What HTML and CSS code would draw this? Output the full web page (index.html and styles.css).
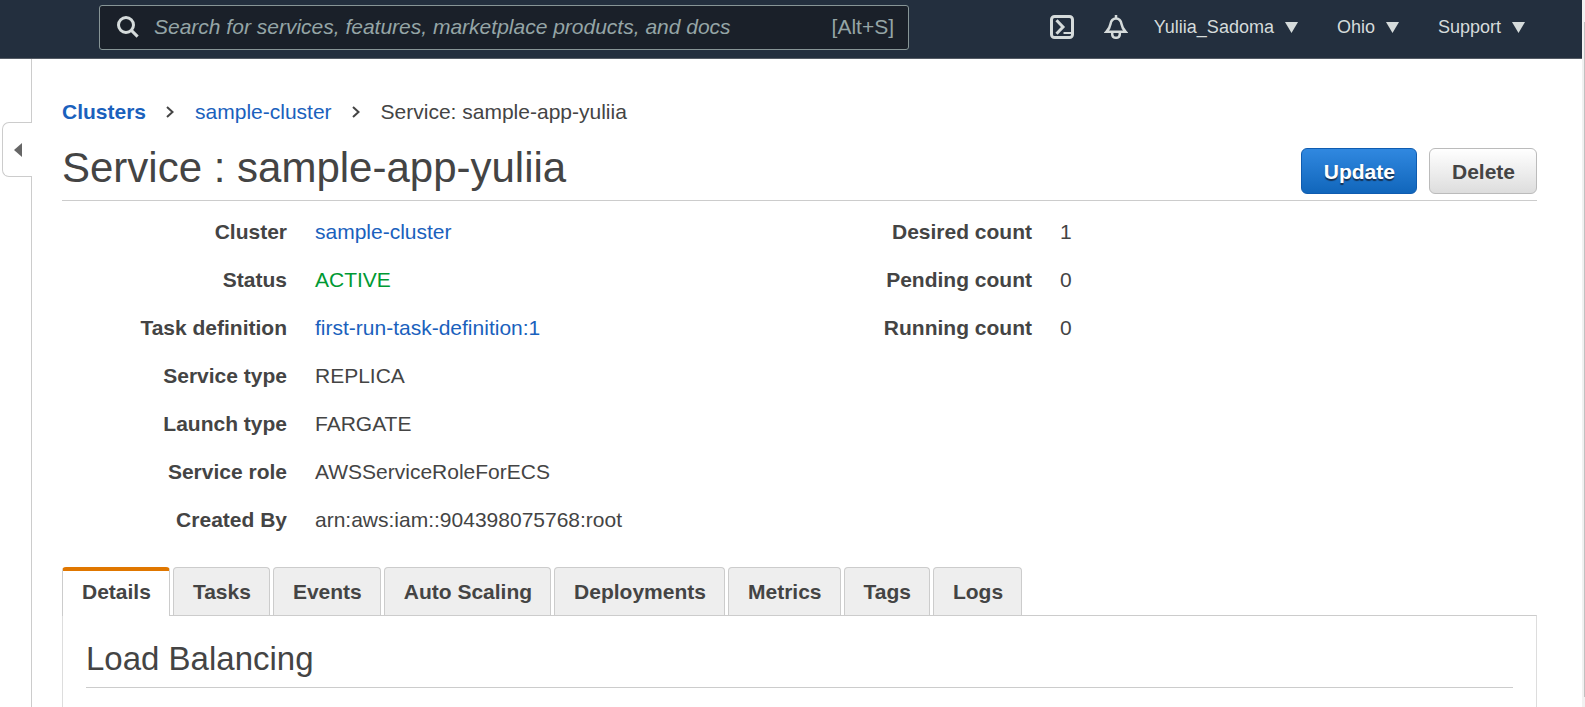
FILE: index.html
```
<!DOCTYPE html>
<html lang="en">
<head>
<meta charset="utf-8">
<title>Service : sample-app-yuliia</title>
<link rel="stylesheet" href="styles.css">
</head>
<body>
<div class="page">
  <header class="topbar">
    <form class="search">
      <svg class="search-icon" viewBox="0 0 22 22" aria-hidden="true"><circle cx="9" cy="9" r="7.5"/><path d="M14.4 14.4L20.6 20.6"/></svg>
      <input class="search-input" type="text" aria-label="Search" placeholder="Search for services, features, marketplace products, and docs">
      <span class="search-hint">[Alt+S]</span>
    </form>
    <nav class="tools">
      <button class="icon-button" type="button" aria-label="CloudShell">
        <svg class="icon" viewBox="0 0 24 24"><rect x="1.5" y="1.5" width="21" height="21" rx="3"/><path d="M6.500 5.200L13 12L6.500 18.800"/><path class="thin" d="M13.500 18H21"/></svg>
      </button>
      <button class="icon-button" type="button" aria-label="Notifications">
        <svg class="icon bell" viewBox="0 0 24 24"><path d="M12 0V3"/><path d="M12 3.400C8.800 3.400 7 5.600 6.500 9C6 12.500 5 14 2.300 16.800H21.700C19 14 18 12.500 17.500 9C17 5.600 15.200 3.400 12 3.400Z"/><path d="M8.200 17.500V19C8.200 21.400 9.700 22.800 12 22.800C14.300 22.800 15.800 21.400 15.800 19V17.500"/></svg>
      </button>
      <button class="menu" type="button">Yuliia_Sadoma<svg class="caret" viewBox="0 0 13 11"><path d="M0 0H13L6.500 11Z"/></svg></button>
      <button class="menu" type="button">Ohio<svg class="caret" viewBox="0 0 13 11"><path d="M0 0H13L6.500 11Z"/></svg></button>
      <button class="menu" type="button">Support<svg class="caret" viewBox="0 0 13 11"><path d="M0 0H13L6.500 11Z"/></svg></button>
    </nav>
  </header>
  <div class="body">
    <aside class="rail">
      <button class="rail-toggle" type="button" aria-label="Open navigation"><svg class="rail-arrow" viewBox="0 0 8 14"><path d="M8 0V14L0 7Z"/></svg></button>
    </aside>
    <main class="content">
      <nav class="crumbs" aria-label="Breadcrumb">
        <a class="crumb-root" href="#">Clusters</a>
        <svg class="chevron" viewBox="0 0 8 12"><path d="M1 1L6.500 6L1 11"/></svg>
        <a href="#">sample-cluster</a>
        <svg class="chevron" viewBox="0 0 8 12"><path d="M1 1L6.500 6L1 11"/></svg>
        <span>Service: sample-app-yuliia</span>
      </nav>
      <div class="title-row">
        <h1 class="title">Service : sample-app-yuliia</h1>
        <div class="actions">
          <button class="btn btn-primary" type="button">Update</button>
          <button class="btn" type="button">Delete</button>
        </div>
      </div>
      <div class="summary">
        <dl class="facts">
          <dt>Cluster</dt><dd><a href="#">sample-cluster</a></dd>
          <dt>Status</dt><dd class="active">ACTIVE</dd>
          <dt>Task definition</dt><dd><a href="#">first-run-task-definition:1</a></dd>
          <dt>Service type</dt><dd>REPLICA</dd>
          <dt>Launch type</dt><dd>FARGATE</dd>
          <dt>Service role</dt><dd>AWSServiceRoleForECS</dd>
          <dt>Created By</dt><dd>arn:aws:iam::904398075768:root</dd>
        </dl>
        <dl class="facts">
          <dt>Desired count</dt><dd>1</dd>
          <dt>Pending count</dt><dd>0</dd>
          <dt>Running count</dt><dd>0</dd>
        </dl>
      </div>
      <div class="tabs" role="tablist">
        <button class="tab selected" type="button" role="tab" aria-selected="true">Details</button>
        <button class="tab" type="button" role="tab">Tasks</button>
        <button class="tab" type="button" role="tab">Events</button>
        <button class="tab" type="button" role="tab">Auto Scaling</button>
        <button class="tab" type="button" role="tab">Deployments</button>
        <button class="tab" type="button" role="tab">Metrics</button>
        <button class="tab" type="button" role="tab">Tags</button>
        <button class="tab" type="button" role="tab">Logs</button>
      </div>
      <section class="panel" role="tabpanel">
        <h2 class="panel-title">Load Balancing</h2>
      </section>
    </main>
  </div>
</div>
<div class="scrollbar" aria-hidden="true"><div class="scroll-thumb"></div></div>
</body>
</html>
```
FILE: styles.css
```
* { box-sizing: border-box; }
body {
  margin: 0;
  display: flex;
  height: 100vh;
  overflow: hidden;
  background: #fff;
  color: #444;
  font: 21px/24px "Liberation Sans", Arial, sans-serif;
}
button, input { font: inherit; }
a { color: #1a61bd; text-decoration: none; }

.page { flex: 1; min-width: 0; display: flex; flex-direction: column; }

.topbar {
  flex: none;
  display: flex;
  align-items: flex-start;
  justify-content: space-between;
  padding: 5px 57px 8px 99px;
  background: #232f3e;
  border-bottom: 1px solid #545b64;
}
.search {
  flex: 0 1 810px;
  display: flex;
  align-items: center;
  height: 45px;
  padding: 0 14px 2px 17px;
  background: #1a2029;
  border: 1px solid #879596;
  border-radius: 3px;
}
.search-icon { flex: none; width: 22px; height: 22px; fill: none; stroke: #d5dbdb; stroke-width: 3; }
.search-input {
  flex: 1;
  min-width: 0;
  margin-left: 15px;
  padding: 0;
  border: 0;
  outline: 0;
  background: none;
  color: #d5dbdb;
}
.search-input::placeholder { color: #95a5a6; font-style: italic; opacity: 1; }
.search-hint { color: #95a5a6; }

.tools { display: flex; align-items: center; height: 44px; }
.icon-button { display: flex; margin-right: 30px; padding: 0; border: 0; background: none; }
.icon-button + .menu { margin-left: -4px; }
.icon { width: 24px; height: 24px; fill: none; stroke: #d5dbdb; stroke-width: 3; }
.icon .thin { stroke-width: 2; }
.icon.bell { stroke-width: 2.5; }
.menu {
  display: flex;
  align-items: center;
  gap: 11px;
  padding: 0;
  border: 0;
  background: none;
  color: #d5dbdb;
  font-size: 18px;
}
.menu + .menu { margin-left: 39px; }
.caret { width: 13px; height: 11px; fill: #d5dbdb; }

.body { flex: 1; display: flex; min-height: 0; }
.rail { flex: none; width: 32px; padding: 63px 0 0 2px; border-right: 1px solid #ccc; }
.rail-toggle {
  display: flex;
  align-items: center;
  justify-content: center;
  width: 30px;
  height: 55px;
  padding: 0;
  background: #fff;
  border: 1px solid #ccc;
  border-right: 0;
  border-radius: 7px 0 0 7px;
}
.rail-arrow { width: 8px; height: 14px; fill: #666; }

.content { flex: 1; min-width: 0; display: flex; flex-direction: column; padding: 41px 45px 0 30px; }
.crumbs { display: flex; align-items: center; }
.crumb-root { font-weight: bold; }
.chevron { width: 8px; height: 12px; margin: 0 21px 0 20px; fill: none; stroke: #444; stroke-width: 2; }
.title-row {
  display: flex;
  justify-content: space-between;
  align-items: flex-end;
  margin-top: 19px;
  padding-bottom: 6px;
  border-bottom: 1px solid #ccc;
}
.title { margin: 0; padding-bottom: 1px; font-size: 42px; line-height: 50px; font-weight: normal; }
.actions { display: flex; gap: 12px; }
.btn {
  height: 46px;
  padding: 2px 21px 0 22px;
  border: 1px solid #bbb;
  border-radius: 6px;
  background: linear-gradient(#fff, #ddd);
  color: #444;
  font-weight: bold;
}
.btn-primary {
  border-color: #0f5cb0;
  background: linear-gradient(#3088e0, #1166bb);
  color: #fff;
  text-shadow: 0 2px 1px #143052;
}

.summary { display: grid; grid-template-columns: 1fr 1fr; gap: 15px; align-items: start; margin-top: 19px; }
.facts { display: grid; grid-template-columns: 225px 1fr; gap: 24px 28px; margin: 0; }
.facts dt { font-weight: bold; text-align: right; }
.facts dd { margin: 0; }
.active { color: #093; }

.tabs { display: flex; gap: 3px; margin-top: 35px; }
.tab {
  height: 48px;
  padding: 0 18px 0 19px;
  border: 1px solid #ccc;
  border-bottom: 0;
  border-radius: 4px 4px 0 0;
  background: #eee;
  color: #444;
  font-weight: bold;
}
.tab.selected {
  z-index: 1;
  height: 49px;
  margin-bottom: -1px;
  padding-bottom: 4px;
  border-top: 4px solid #e07700;
  background: #fff;
}
.panel { flex: 1; padding: 24px 23px 0; border: 1px solid #ddd; border-top-color: #ccc; border-bottom: 0; }
.panel-title {
  margin: 0;
  padding-bottom: 9px;
  border-bottom: 1px solid #ccc;
  font-size: 33px;
  line-height: 38px;
  font-weight: normal;
}

.scrollbar { flex: none; width: 3px; padding: 22px 0 10px 2px; background: #f1f1f1; }
.scroll-thumb { height: 100%; background: #c1c1c1; }
```
